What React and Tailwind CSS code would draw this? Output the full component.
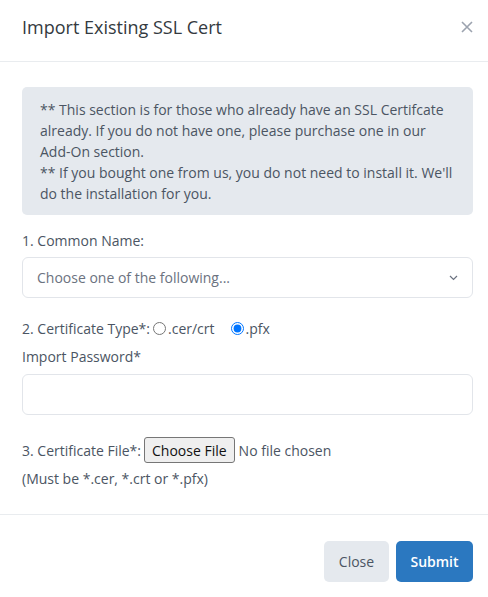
import { useState } from 'react';

const App = () => {
    const [certType, setCertType] = useState('pfx');

    return (
        <div className="min-h-screen bg-white text-[14px] leading-[21px] text-[#4b5563]" style={{ fontFamily: '"Open Sans", "Liberation Sans", sans-serif' }}>
            <div className="flex items-start justify-between pl-[22px] pr-[15px] pt-[14px] pb-[20px] border-b border-[#e9ecef]">
                <h5 className="text-[18px] leading-[27px] text-[#343a40]">Import Existing SSL Cert</h5>
                <button type="button" className="mt-[7px] text-[#9ca3af]">
                    <svg width="12" height="12" viewBox="0 0 12 12" fill="none" stroke="currentColor" strokeWidth="1.6">
                        <path d="M1 1L11 11M11 1L1 11" />
                    </svg>
                </button>
            </div>

            <div className="pl-[22px] pr-[15px] pt-[25px] pb-[25px]">
                <div className="bg-[#e5e9ee] rounded-[5px] px-[18px] pt-[12px] pb-[11px]">
                    ** This section is for those who already have an SSL Certifcate already. If you do not have one, please purchase one in our Add-On section.
                    <br />
                    ** If you bought one from us, you do not need to install it. We'll do the installation for you.
                </div>

                <label className="block mt-[15px]">1. Common Name:</label>
                <div className="relative mt-[6px]">
                    <select className="w-full h-[41px] appearance-none bg-white border border-[#e2e5ea] rounded-[6px] pl-[14px] pr-8 text-[#6b7280] outline-none">
                        <option>Choose one of the following...</option>
                    </select>
                    <svg className="absolute right-[15px] top-[18px] text-[#6b7280]" width="9" height="6" viewBox="0 0 9 6" fill="none" stroke="currentColor" strokeWidth="1.2">
                        <path d="M1 1L4.5 4.5L8 1" />
                    </svg>
                </div>

                <div className="flex items-center mt-[20px]">
                    <span>2. Certificate Type*:</span>
                    <label className="flex items-center">
                        <input
                            type="radio"
                            name="certType"
                            checked={certType === 'cer'}
                            onChange={() => setCertType('cer')}
                            className="w-[13px] h-[13px] ml-[3px] mr-[2px]"
                        />
                        <span>.cer/crt</span>
                    </label>
                    <label className="flex items-center ml-[16px]">
                        <input
                            type="radio"
                            name="certType"
                            checked={certType === 'pfx'}
                            onChange={() => setCertType('pfx')}
                            className="w-[13px] h-[13px] mr-[2px]"
                        />
                        <span>.pfx</span>
                    </label>
                </div>

                <label className="block mt-[7px]">Import Password*</label>
                <input type="password" className="block w-full h-[41px] mt-[7px] border border-[#e2e5ea] rounded-[6px] px-[14px] outline-none" />

                <div className="flex items-center mt-[22px] h-[26px]">
                    <span>3. Certificate File*:</span>
                    <button type="button" className="ml-[3px] h-[26px] px-[7px] bg-[#efefef] border border-[#767676] rounded-[3px] text-[#111]">Choose File</button>
                    <span className="ml-[4px]">No file chosen</span>
                </div>
                <div className="mt-[5px]">(Must be *.cer, *.crt or *.pfx)</div>
            </div>

            <div className="flex justify-end gap-[7px] pl-[22px] pr-[15px] pt-[26px] pb-[16px] border-t border-[#e9ecef]">
                <button type="button" className="h-[41px] w-[65px] rounded-[5px] bg-[#e5e9ee] text-[#4b5563]">Close</button>
                <button type="button" className="h-[41px] w-[77px] rounded-[5px] bg-[#2b78c0] text-white font-semibold">Submit</button>
            </div>
        </div>
    );
};

export default App;
